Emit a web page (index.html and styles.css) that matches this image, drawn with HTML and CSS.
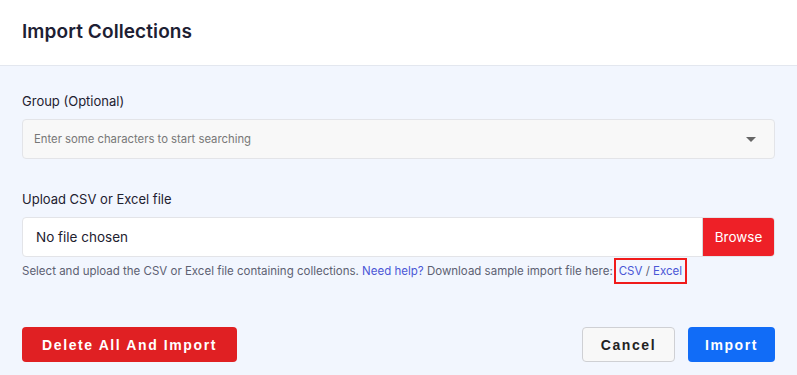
FILE: index.html
```html
<!DOCTYPE html>
<html>
<head>
<meta charset="utf-8">
<link rel="stylesheet" href="styles.css">
</head>
<body>
<div class="modal">
  <div class="modal-header">
    <h1 class="modal-title">Import Collections</h1>
  </div>
  <div class="modal-body">
    <div class="field">
      <label class="label">Group (Optional)</label>
      <div class="select">
        <span class="placeholder">Enter some characters to start searching</span>
        <svg class="caret" width="10" height="6" viewBox="0 0 10 6"><path d="M0 0H10L5 5Z" fill="#666"/></svg>
      </div>
    </div>
    <div class="field upload">
      <label class="label">Upload CSV or Excel file</label>
      <div class="file">
        <span class="file-text">No file chosen</span>
        <span class="browse">Browse</span>
      </div>
      <p class="help">Select and upload the CSV or Excel file containing collections. <a class="link">Need help?</a> Download sample import file here:<span class="boxed"><a class="link">CSV</a> / <a class="link">Excel</a></span></p>
    </div>
    <div class="actions">
      <button class="btn btn-danger">Delete All And Import</button>
      <div class="right">
        <button class="btn btn-light">Cancel</button>
        <button class="btn btn-primary">Import</button>
      </div>
    </div>
  </div>
</div>
</body>
</html>
```

FILE: styles.css
```css
* { box-sizing: border-box; }
html, body { margin: 0; padding: 0; }
body {
  width: 797px;
  height: 375px;
  overflow: hidden;
  font-family: "Inter", "Noto Sans", sans-serif;
  background: #f2f6fe;
}
.modal { display: flex; flex-direction: column; height: 375px; }
.modal-header {
  background: #fff;
  height: 66px;
  border-bottom: 1px solid #e3e7ef;
  padding: 0 22px;
  display: flex;
  align-items: center;
}
.modal-title {
  margin: 0;
  font-size: 19px;
  font-weight: 600;
  color: #1d2033;
  letter-spacing: 0.1px;
  padding-bottom: 2px;
}
.modal-body {
  padding: 26px 22px 0 22px;
  flex: 1;
  display: flex;
  flex-direction: column;
}
.label {
  display: block;
  font-size: 13px;
  color: #1e2130;
  line-height: 18px;
  margin-bottom: 9px;
}
.select {
  height: 40px;
  background: #f8f8f8;
  border: 1px solid #e3e4e8;
  border-radius: 4px;
  display: flex;
  align-items: center;
  justify-content: space-between;
  padding: 0 18px 0 11px;
}
.placeholder { font-size: 11.3px; color: #777; }
.caret { margin-top: 1px; }
.upload { margin-top: 31px; }
.file {
  height: 40px;
  background: #fff;
  border: 1px solid #e3e4e8;
  border-radius: 4px;
  display: flex;
  align-items: stretch;
  overflow: hidden;
}
.file-text {
  flex: 1;
  display: flex;
  align-items: center;
  padding-left: 13px;
  font-size: 13.5px;
  color: #1e2130;
}
.browse {
  width: 72px;
  background: #ee2027;
  color: #fff;
  display: flex;
  align-items: center;
  justify-content: center;
  font-size: 13.5px;
  border-left: 1px solid #d8d8d8;
}
.help {
  margin: 6px 0 0 0;
  font-size: 11.5px;
  color: #5d6172;
  line-height: 16px;
}
.link { color: #4b57d6; }
.boxed {
  display: inline-block;
  border: 2px solid #f01b1b;
  padding: 4px 3px 4px 3px;
  margin-left: 1px;
  margin-top: -7px;
  vertical-align: baseline;
  line-height: 14px;
}
.actions {
  margin-top: auto;
  margin-bottom: 13px;
  display: flex;
  justify-content: space-between;
  align-items: center;
}
.right { display: flex; gap: 13px; }
.btn {
  height: 35px;
  border-radius: 4px;
  font-family: "Liberation Sans", Arial, sans-serif;
  font-weight: 700;
  font-size: 14px;
  letter-spacing: 1.6px;
  border: 1px solid transparent;
  cursor: pointer;
}
.btn-danger { background: #e02023; color: #fff; width: 215px; }
.btn-light { background: #f8f8f8; color: #222; border-color: #cfd0d4; width: 93px; }
.btn-primary { background: #116cf7; color: #fff; width: 87px; }
```
